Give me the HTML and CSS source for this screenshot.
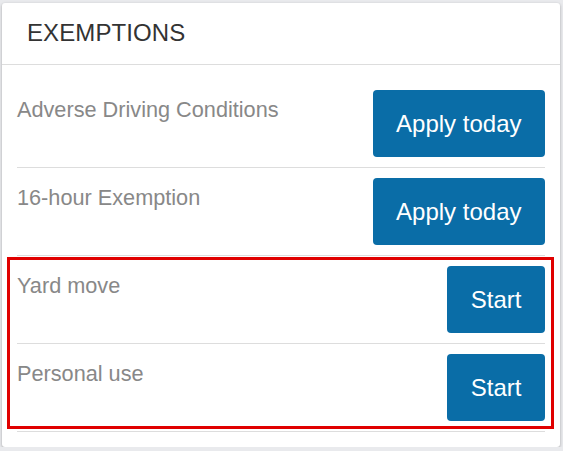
FILE: index.html
```html
<!DOCTYPE html>
<html lang="en">

<head>
      <meta charset="UTF-8">
      <meta name="viewport" content="width=device-width, initial-scale=1.0">
      <title>Exemptions</title>
      <link rel="stylesheet" href="styles.css">
</head>

<body>
      <div class="card">
            <div class="card-header">EXEMPTIONS</div>
            <div class="list">
                  <div class="row">
                        <span class="label">Adverse Driving Conditions</span>
                        <button class="action">Apply today</button>
                  </div>
                  <div class="row">
                        <span class="label">16-hour Exemption</span>
                        <button class="action">Apply today</button>
                  </div>
                  <div class="highlight">
                        <div class="row">
                              <span class="label">Yard move</span>
                              <button class="action">Start</button>
                        </div>
                        <div class="row">
                              <span class="label">Personal use</span>
                              <button class="action">Start</button>
                        </div>
                  </div>
            </div>
      </div>
</body>

</html>
```

FILE: styles.css
```css
body {
      font-family: "Liberation Sans", Arial, sans-serif;
      background-color: #e9eaed;
      margin: 0;
      padding: 3px 3px 0 2px;
}

.card {
      background-color: #fff;
      border-radius: 3px;
      box-shadow: 0 1px 3px rgba(0, 0, 0, 0.3);
}

.card-header {
      padding: 16px 24px 17px 25px;
      font-size: 24px;
      letter-spacing: 0.1px;
      line-height: 28px;
      color: #333;
      border-bottom: 1px solid #ddd;
}

.list {
      padding: 15px 15px;
}

.row {
      display: flex;
      justify-content: space-between;
      align-items: flex-start;
      padding: 10px 0;
      border-bottom: 1px solid #ddd;
}

.label {
      padding-top: 8px;
      font-size: 21.7px;
      line-height: 24px;
      color: #888;
}

.action {
      height: 67px;
      padding: 0 23.5px;
      border: none;
      border-radius: 4px;
      background-color: #0a6da7;
      color: #fff;
      font-family: inherit;
      font-size: 24px;
      cursor: pointer;
}

/* red frame drawn over the last two rows */
.highlight {
      position: relative;
}

.highlight::after {
      content: "";
      position: absolute;
      top: 1px;
      bottom: 3px;
      left: -10px;
      right: -9px;
      border: 3px solid #e00000;
      pointer-events: none;
}
```
